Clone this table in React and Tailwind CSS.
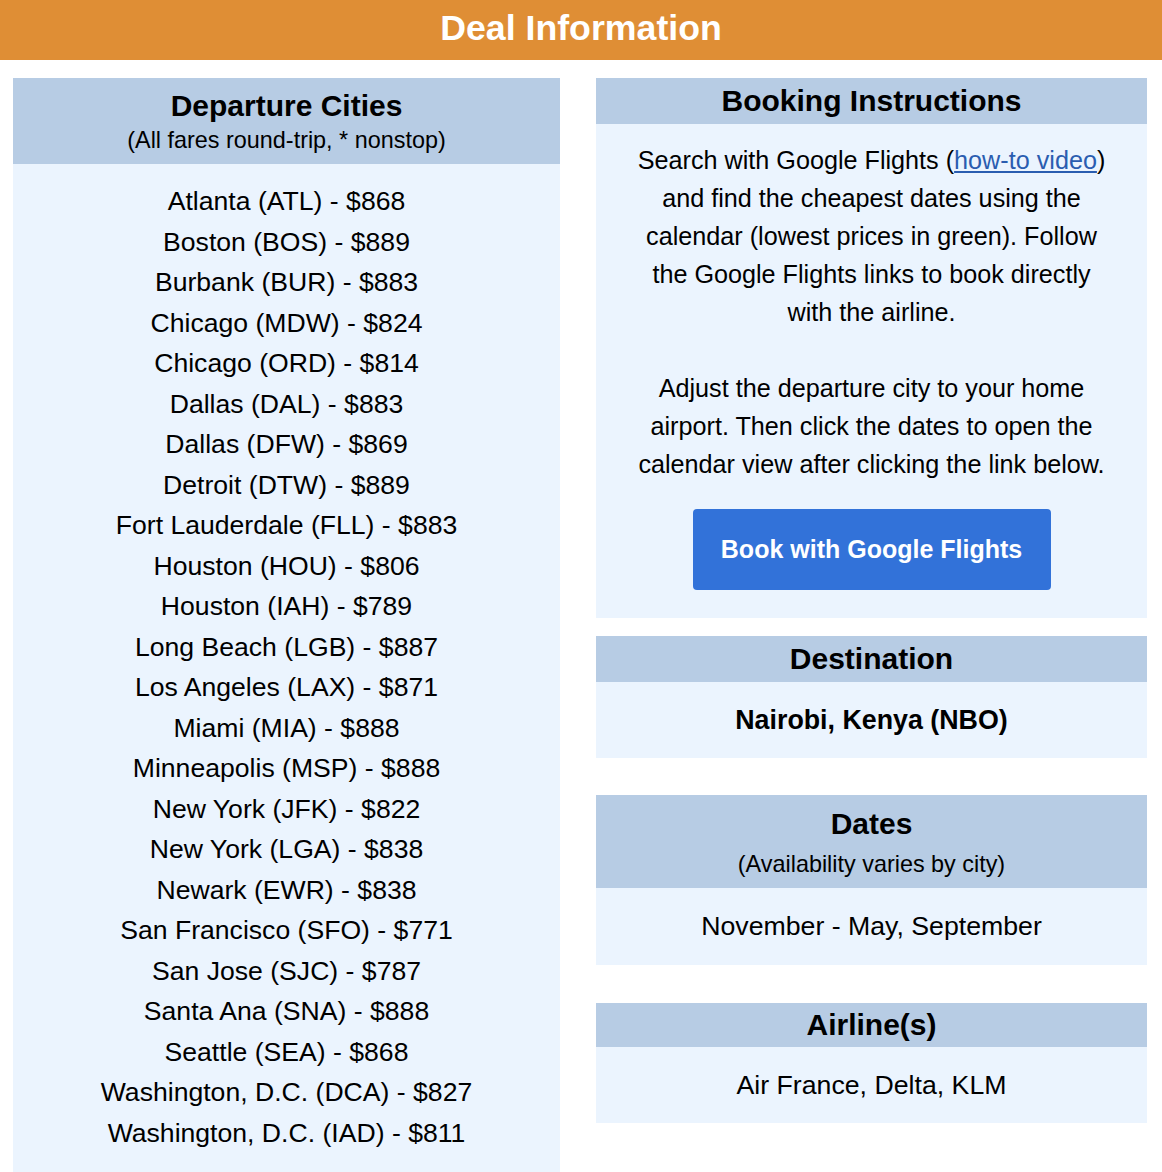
import React from 'react';

const cities = [
  ['Atlanta (ATL)', 868],
  ['Boston (BOS)', 889],
  ['Burbank (BUR)', 883],
  ['Chicago (MDW)', 824],
  ['Chicago (ORD)', 814],
  ['Dallas (DAL)', 883],
  ['Dallas (DFW)', 869],
  ['Detroit (DTW)', 889],
  ['Fort Lauderdale (FLL)', 883],
  ['Houston (HOU)', 806],
  ['Houston (IAH)', 789],
  ['Long Beach (LGB)', 887],
  ['Los Angeles (LAX)', 871],
  ['Miami (MIA)', 888],
  ['Minneapolis (MSP)', 888],
  ['New York (JFK)', 822],
  ['New York (LGA)', 838],
  ['Newark (EWR)', 838],
  ['San Francisco (SFO)', 771],
  ['San Jose (SJC)', 787],
  ['Santa Ana (SNA)', 888],
  ['Seattle (SEA)', 868],
  ['Washington, D.C. (DCA)', 827],
  ['Washington, D.C. (IAD)', 811],
];

const SectionHead = ({ title, sub, className = '', subClass = '' }) => (
  <div className={`bg-[#b7cce4] text-center text-black ${className}`}>
    <h2 className="text-[30px] font-bold leading-[36px]">{title}</h2>
    {sub && <p className={`text-[23.4px] leading-[30px] ${subClass}`}>{sub}</p>}
  </div>
);

const App = () => {
  return (
    <div className="w-[1162px] min-h-[1172px] bg-white text-black font-['Liberation_Sans',Arial,sans-serif]">
      {/* Title bar */}
      <div className="h-[60px] bg-[#df8e35] flex items-center justify-center">
        <h1 className="text-[35.7px] font-bold text-white leading-none pb-[2px]">Deal Information</h1>
      </div>

      <div className="flex gap-[36px] pl-[13px] pr-[15px] pt-[18px]">
        {/* Departure cities */}
        <div className="w-[547px] flex flex-col">
          <SectionHead
            title="Departure Cities"
            sub="(All fares round-trip, * nonstop)"
            className="pt-[10px] pb-[9px]"
            subClass="mt-[1px]"
          />
          <ul className="bg-[#ebf4fe] text-center text-[26.6px] leading-[40.5px] pt-[17px] pb-[28px]">
            {cities.map(([name, price]) => (
              <li key={name}>{name} - ${price}</li>
            ))}
          </ul>
        </div>

        {/* Right column */}
        <div className="w-[551px] flex flex-col">
          {/* Booking instructions */}
          <div>
            <SectionHead title="Booking Instructions" className="h-[46px] pt-[5px]" />
            <div className="bg-[#ebf4fe] text-center pt-[17px] pb-[28px] px-[38px]">
              <p className="text-[25.2px] leading-[38px]">
                Search with Google Flights (
                <a href="#" className="text-[#2a5db0] underline">how-to video</a>
                ) and find the cheapest dates using the calendar (lowest prices in green). Follow the Google Flights links to book directly with the airline.
              </p>
              <p className="text-[25.2px] leading-[38px] mt-[38px]">
                Adjust the departure city to your home airport. Then click the dates to open the calendar view after clicking the link below.
              </p>
              <a
                href="#"
                className="mt-[26px] mx-auto flex items-center justify-center w-[358px] h-[81px] rounded-[4px] bg-[#3272d9] text-white font-bold text-[25px]"
              >
                Book with Google Flights
              </a>
            </div>
          </div>

          {/* Destination */}
          <div className="mt-[18px]">
            <SectionHead title="Destination" className="h-[46px] pt-[5px]" />
            <div className="bg-[#ebf4fe] h-[76px] flex items-center justify-center">
              <p className="text-[26.8px] font-bold leading-none">Nairobi, Kenya (NBO)</p>
            </div>
          </div>

          {/* Dates */}
          <div className="mt-[37px]">
            <SectionHead
              title="Dates"
              sub="(Availability varies by city)"
              className="h-[93px] pt-[11px]"
              subClass="mt-[7px]"
            />
            <div className="bg-[#ebf4fe] h-[77px] flex items-center justify-center">
              <p className="text-[26.7px] leading-none">November - May, September</p>
            </div>
          </div>

          {/* Airlines */}
          <div className="mt-[38px]">
            <SectionHead title="Airline(s)" className="h-[44px] pt-[4px]" />
            <div className="bg-[#ebf4fe] h-[76px] flex items-center justify-center">
              <p className="text-[26.7px] leading-none">Air France, Delta, KLM</p>
            </div>
          </div>
        </div>
      </div>
    </div>
  );
};

export default App;
